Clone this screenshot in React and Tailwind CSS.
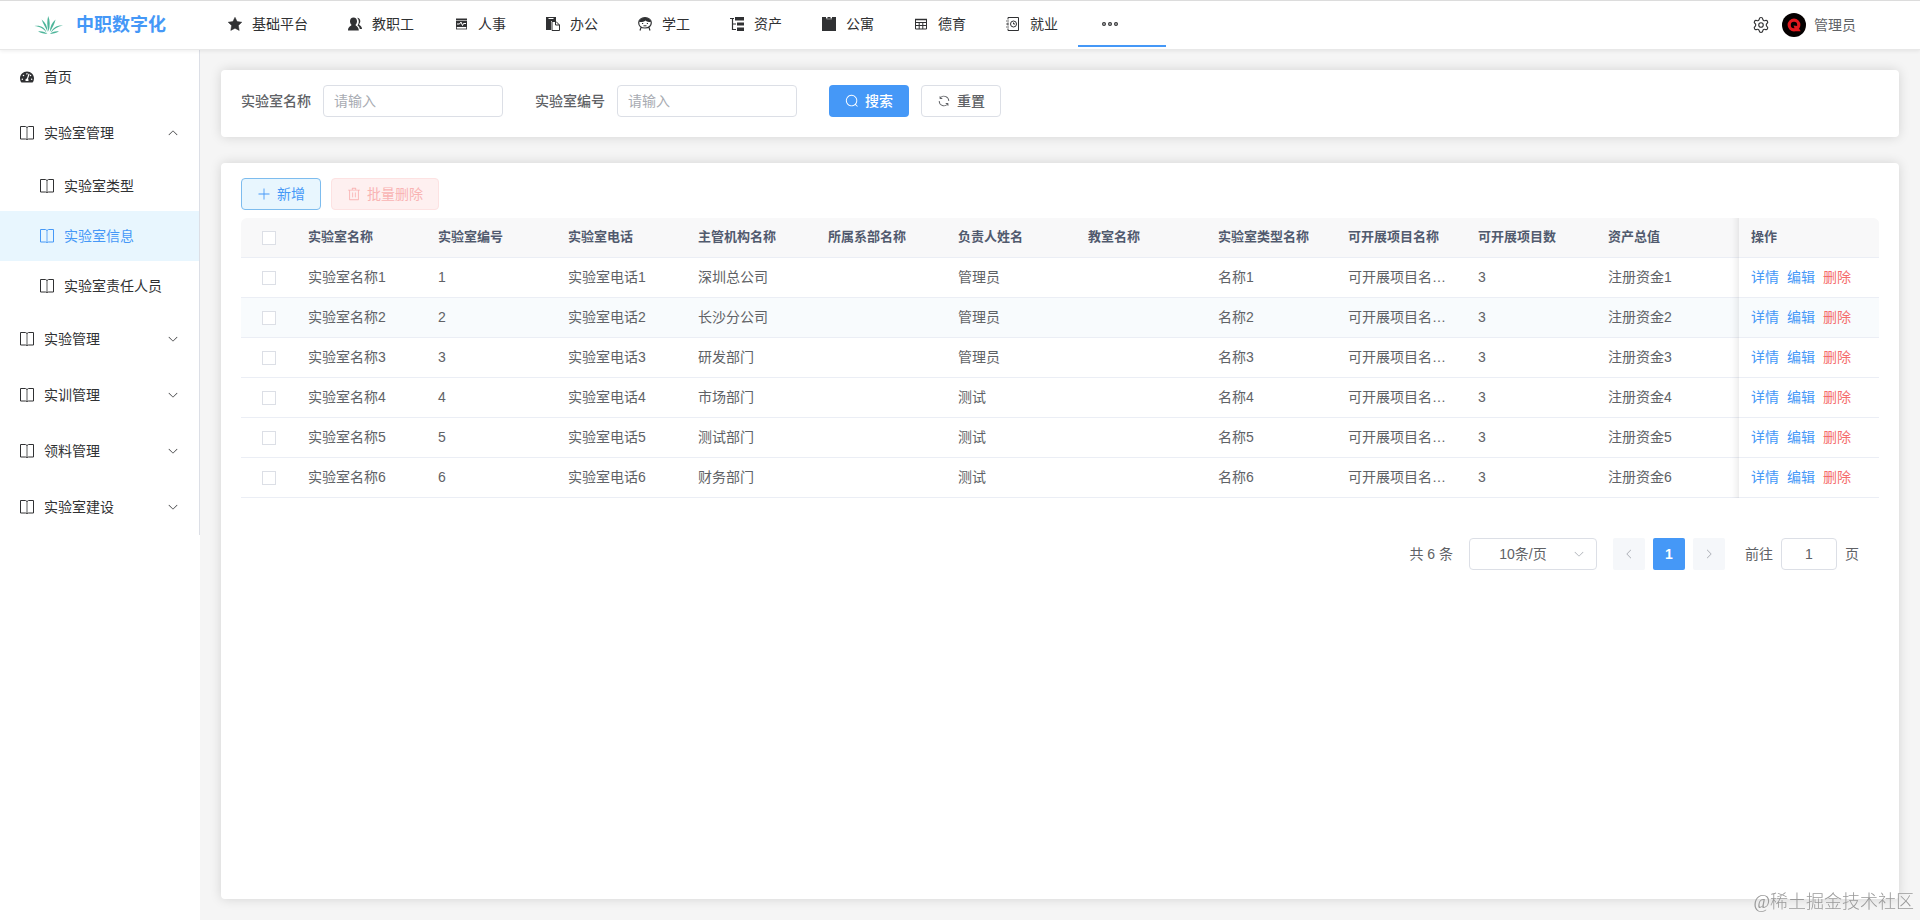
import { useState } from 'react';
import { Settings } from 'lucide-react';
import { FaTachometerAlt } from 'react-icons/fa';
import clsx from 'clsx';

const ICON_PATHS = {
  search: 'm795.904 750.72 124.992 124.928a32 32 0 0 1-45.248 45.248L750.656 795.904a416 416 0 1 1 45.248-45.248zM480 832a352 352 0 1 0 0-704 352 352 0 0 0 0 704',
  refresh: 'M771.776 794.88A384 384 0 0 1 128 512h64a320 320 0 0 0 555.712 216.448H654.72a32 32 0 1 1 0-64h149.056a32 32 0 0 1 32 32v148.928a32 32 0 1 1-64 0v-50.56zM276.288 295.616h92.992a32 32 0 0 1 0 64H220.16a32 32 0 0 1-32-32V178.56a32 32 0 0 1 64 0v50.56A384 384 0 0 1 896.128 512h-64a320 320 0 0 0-555.776-216.384z',
  trash: 'M160 256H96a32 32 0 0 1 0-64h256V95.936a32 32 0 0 1 32-32h256a32 32 0 0 1 32 32V192h256a32 32 0 1 1 0 64h-64v672a32 32 0 0 1-32 32H192a32 32 0 0 1-32-32zm448-64v-64H416v64zM224 896h576V256H224zm192-128a32 32 0 0 1-32-32V416a32 32 0 0 1 64 0v320a32 32 0 0 1-32 32m192 0a32 32 0 0 1-32-32V416a32 32 0 0 1 64 0v320a32 32 0 0 1-32 32',
  plus: 'M480 480V128a32 32 0 0 1 64 0v352h352a32 32 0 1 1 0 64H544v352a32 32 0 1 1-64 0V544H128a32 32 0 0 1 0-64z',
  arrow: 'M831.872 340.864 512 652.672 192.128 340.864a30.592 30.592 0 0 0-42.752 0 29.12 29.12 0 0 0 0 41.6L489.664 714.24a32 32 0 0 0 44.672 0l340.288-331.712a29.12 29.12 0 0 0 0-41.728 30.592 30.592 0 0 0-42.752 0z',
};

function Icon({ name, className = 'size-3.5' }) {
  return (
    <svg viewBox="0 0 1024 1024" fill="currentColor" className={clsx('shrink-0', className)} aria-hidden="true">
      <path d={ICON_PATHS[name]} />
    </svg>
  );
}

function SmallIcon({ children }) {
  return (
    <svg viewBox="0 0 14 14" fill="none" stroke="currentColor" className="size-3.5 shrink-0" aria-hidden="true">
      {children}
    </svg>
  );
}

const BookIcon = () => (
  <SmallIcon>
    <path d="M.5.5v12.500h5L7 13.500l1.500-.5h5V.5h-5L7 1.500 5.500.5Z" />
    <path d="M7 1.500v11.500" strokeWidth="2" opacity=".4" />
  </SmallIcon>
);

const StarIcon = () => (
  <SmallIcon>
    <path
      d="m7 .3 2.100 4.200 4.700.7-3.400 3.300.8 4.900L7 11.200l-4.200 2.200.8-4.900L.2 5.200l4.700-.7Z"
      fill="currentColor"
      strokeWidth=".5"
      strokeLinejoin="round"
    />
  </SmallIcon>
);

const UsersIcon = () => (
  <SmallIcon>
    <g fill="currentColor" stroke="none">
      <path d="M9 .8c2 0 3.300 1.300 3.300 3.300 0 1.300-.5 2.500-1.200 3.200 0 1 2.900 1.700 2.900 4.700h-2.200c-.3-2-1.300-2.900-2.300-3.500.8-1 1.300-2.400 1.300-3.900C10.800 3 10.200 1.700 9 .8Z" />
      <path d="M5.500.5C7.700.5 9 2 9 4.200c0 1.500-.6 2.900-1.500 3.600 0 1.400 3.300 1.400 3.300 5.700H0c0-4.300 3.500-4.300 3.500-5.700C2.600 7.100 2 5.700 2 4.200 2 2 3.300.5 5.500.5Z" />
    </g>
  </SmallIcon>
);

const MonitorIcon = () => (
  <SmallIcon>
    <path d="M2 1.500h11v8.500H2z" fill="currentColor" stroke="none" />
    <path d="M2 3.500h11" stroke="#aaa" />
    <path d="M2 12h11M2.500 10v2M12.500 10v2" opacity=".8" />
    <path d="M3 7h2.500L7 5l1.500 3.500L9.500 6.500H12" stroke="#fff" />
  </SmallIcon>
);

const PasteIcon = () => (
  <SmallIcon>
    <path d="M0 0h10v4H5v9H0z" fill="currentColor" stroke="none" />
    <path d="M2.500 1.500h5" stroke="#fff" />
    <path d="M6 4.500h4l3.500 3.500v5.500H6z" fill="#fff" />
    <path d="M9.500 4.500V8h4" />
  </SmallIcon>
);

const FaceIcon = () => (
  <SmallIcon>
    <path d="M7 .7C3.200.7.7 2.800.7 5.700S3 11 7 11s6.300-2.400 6.300-5.300S10.800.7 7 .7ZM3 10.500 2 13.500M11 10.500l1 3" strokeWidth="1.200" />
    <path d="M1 5C1.500 2 4 .7 7 .7S12.500 2 13 5C10.500 5 8.500 4.500 7.500 3.500 6 5 3.500 5.200 1 5Z" fill="currentColor" stroke="none" />
    <path d="M4 6.500h1.200M8.800 6.500H10M5.500 8.800h3" />
  </SmallIcon>
);

const TreeIcon = () => (
  <SmallIcon>
    <path d="M0 1.500h4M2.500 1v11.500H6M2.500 7H6" strokeWidth="1.200" />
    <path d="M5 0h9v3.500H5zM7 5.500h7v3H7zM7 10.500h7V14H7z" fill="currentColor" stroke="none" />
  </SmallIcon>
);

const CalendarIcon = () => (
  <SmallIcon>
    <path d="M0 0h4v1.500h1.500V0h3v1.500H10V0h4v14H0z" fill="currentColor" stroke="none" />
    <path d="M4.500 2h5.500" stroke="#888" />
  </SmallIcon>
);

const TableIcon = () => (
  <SmallIcon>
    <path d="M1.500 2.500h11v9.500h-11zM1.500 5.500h11M1.500 8.500h11M5.200 5.500v6.500M8.800 5.500v6.500" />
    <path d="M1 2.500h12" strokeWidth="1.500" />
  </SmallIcon>
);

const ContactIcon = () => (
  <SmallIcon>
    <path d="M2 .5h10.500v13H2v-2M2 8.500v-3M2 2.500v-2" />
    <path d="M0 4h3M0 10h3M0 7h2" opacity=".7" />
    <circle cx="7.500" cy="7" r="3" />
    <path d="M7.500 5.500V7H9" />
  </SmallIcon>
);

function LogoIcon() {
  return (
    <svg viewBox="0 0 30 20" fill="#4db59a" className="h-5 w-[30px] shrink-0" aria-hidden="true">
      <path d="M14.600 16.500C12.800 10.500 13 5.500 14.200 1c1.900 4.500 2 9.500.4 15.500Z" />
      <path d="M13.600 17C11.500 12 9 8.500 7.600 4.500 11.500 7.500 13.600 11.500 13.600 17Z" />
      <path d="M15.800 17C16 11.500 18 7.500 21.600 4.500 20.500 9 18.500 12.500 15.800 17Z" />
      <path d="M12.600 18C10 13.500 5.500 11.500.5 11 6.500 10 11 12.500 12.600 18Z" />
      <path d="M16.800 18C18.500 12.500 23 10 29 10.500 23.500 11.500 19.500 14 16.800 18Z" />
      <path d="M13.500 19C10.500 19 6.500 18 4 16.300 8 15.800 11.500 17 13.500 19Z" />
      <path d="M15.800 19C18.500 19 22.500 18 25 16.300 21 15.800 17.800 17 15.800 19Z" />
    </svg>
  );
}

function Avatar() {
  return (
    <svg viewBox="0 0 24 24" className="size-6 shrink-0" aria-hidden="true">
      <circle cx="12" cy="12" r="12" fill="#050000" />
      <circle cx="12" cy="12" r="4.800" fill="none" stroke="#e3191f" strokeWidth="3.200" />
      <path d="m11.500 12.500 4 .5 3.200 5.200h-5Z" fill="#e3191f" />
    </svg>
  );
}

const NAV_ITEMS = [
  { label: '基础平台', icon: <StarIcon /> },
  { label: '教职工', icon: <UsersIcon /> },
  { label: '人事', icon: <MonitorIcon /> },
  { label: '办公', icon: <PasteIcon /> },
  { label: '学工', icon: <FaceIcon /> },
  { label: '资产', icon: <TreeIcon /> },
  { label: '公寓', icon: <CalendarIcon /> },
  { label: '德育', icon: <TableIcon /> },
  { label: '就业', icon: <ContactIcon /> },
];

const SUB_ITEMS = ['实验室类型', '实验室信息', '实验室责任人员'];
const GROUPS = ['实验管理', '实训管理', '领料管理', '实验室建设'];

const COLUMNS = [
  { key: 'name', label: '实验室名称' },
  { key: 'code', label: '实验室编号' },
  { key: 'phone', label: '实验室电话' },
  { key: 'org', label: '主管机构名称' },
  { key: 'dept', label: '所属系部名称' },
  { key: 'owner', label: '负责人姓名' },
  { key: 'room', label: '教室名称' },
  { key: 'type', label: '实验室类型名称' },
  { key: 'project', label: '可开展项目名称' },
  { key: 'count', label: '可开展项目数' },
  { key: 'asset', label: '资产总值' },
];

const ROWS = [
  ['深圳总公司', '管理员'],
  ['长沙分公司', '管理员'],
  ['研发部门', '管理员'],
  ['市场部门', '测试'],
  ['测试部门', '测试'],
  ['财务部门', '测试'],
].map(([org, owner], i) => ({
  id: i + 1,
  name: `实验室名称${i + 1}`,
  code: i + 1,
  phone: `实验室电话${i + 1}`,
  org,
  owner,
  type: `名称${i + 1}`,
  project: `可开展项目名称${i + 1}`,
  count: 3,
  asset: `注册资金${i + 1}`,
}));

function Header() {
  return (
    <header className="relative z-10 flex h-[50px] items-stretch border-t border-b border-t-[#dcdcdc] border-b-[#e8e8e8] bg-white pr-16 shadow-[0_1px_4px_rgba(0,0,0,0.08)]">
      <div className="flex w-52 shrink-0 items-center gap-3 pl-[34px]">
        <LogoIcon />
        <h1 className="text-lg font-bold whitespace-nowrap text-[#4598f7]">中职数字化</h1>
      </div>
      <nav className="flex flex-1 items-stretch pb-0.5">
        {NAV_ITEMS.map((item) => (
          <a key={item.label} href="#" className="flex items-center gap-2.5 px-5 whitespace-nowrap">
            {item.icon}
            {item.label}
          </a>
        ))}
        <button
          type="button"
          aria-label="更多"
          className="flex w-22 items-center border-b-2 border-[#4598f7] pt-0.5 pl-6"
        >
          <svg viewBox="0 0 16 6" fill="none" stroke="currentColor" strokeWidth="1.200" className="h-1.5 w-4" aria-hidden="true">
            <circle cx="2" cy="3" r="1.400" />
            <circle cx="8" cy="3" r="1.400" />
            <circle cx="14" cy="3" r="1.400" />
          </svg>
        </button>
      </nav>
      <div className="flex items-center">
        <button type="button" aria-label="设置" className="mr-3">
          <Settings size={18} strokeWidth={1.500} />
        </button>
        <Avatar />
        <span className="ml-2 text-[#606266]">管理员</span>
      </div>
    </header>
  );
}

function GroupItem({ label, open }) {
  return (
    <button type="button" aria-expanded={!!open} className="flex h-14 w-full items-center gap-2.5 px-5 text-left">
      <BookIcon />
      <span className="flex-1">{label}</span>
      <Icon name="arrow" className={clsx('size-3', open && 'rotate-180')} />
    </button>
  );
}

function Sidebar() {
  return (
    <aside className="w-[200px] shrink-0 bg-white">
      <nav className="-mt-px border-r border-[#dcdfe6]">
        <a href="#" className="flex h-14 items-center gap-2.5 px-5">
          <FaTachometerAlt className="size-3.5" />
          首页
        </a>
        <GroupItem label="实验室管理" open />
        {SUB_ITEMS.map((label) => (
          <a
            key={label}
            href="#"
            className={clsx(
              'flex h-[50px] items-center gap-2.5 pl-10',
              label === '实验室信息' && 'bg-[#e8f6fe] text-[#4598f7]'
            )}
          >
            <BookIcon />
            {label}
          </a>
        ))}
        {GROUPS.map((label) => (
          <GroupItem key={label} label={label} />
        ))}
      </nav>
    </aside>
  );
}

function SearchField({ id, label }) {
  return (
    <div className="flex items-center gap-3">
      <label htmlFor={id} className="font-medium text-[#606266]">{label}</label>
      <input
        id={id}
        type="text"
        placeholder="请输入"
        className="h-8 w-45 rounded border border-[#dcdfe6] bg-white px-2.5 text-[#606266] placeholder-[#a8abb2] focus:border-[#4598f7] focus:outline-none"
      />
    </div>
  );
}

function Checkbox({ label, checked, onChange }) {
  return (
    <input
      type="checkbox"
      aria-label={label}
      checked={checked}
      onChange={onChange}
      className="mx-auto block size-3.5 appearance-none border border-[#dcdfe6] bg-white checked:border-[#4598f7] checked:bg-[#4598f7]"
    />
  );
}

// soft edge that the pinned column casts on the cells to its left
const PINNED =
  'sticky right-0 px-3 before:pointer-events-none before:absolute before:top-0 before:-bottom-px before:-left-2.5 before:w-2.5 before:shadow-[inset_-10px_0_10px_-10px_rgba(0,0,0,0.14)]';

function LabTable() {
  const [selected, setSelected] = useState([]);
  const allSelected = selected.length === ROWS.length;

  const toggle = (id) =>
    setSelected((prev) => (prev.includes(id) ? prev.filter((x) => x !== id) : [...prev, id]));

  return (
    <div className="overflow-x-auto rounded-t-md">
      <table className="w-full min-w-[1600px] table-fixed border-separate border-spacing-0 text-left text-[#606266]">
        <colgroup>
          <col className="w-[55px]" />
          {COLUMNS.map((c) => (
            <col key={c.key} className={c.key === 'asset' ? 'w-auto' : 'w-[130px]'} />
          ))}
          <col className="w-[140px]" />
        </colgroup>
        <thead>
          <tr className="h-10 bg-[#f8f8f9] text-[13px] text-[#515a6e]">
            <th className="border-b border-[#ebeef5]">
              <Checkbox
                label="全选"
                checked={allSelected}
                onChange={() => setSelected(allSelected ? [] : ROWS.map((r) => r.id))}
              />
            </th>
            {COLUMNS.map((c) => (
              <th key={c.key} className="border-b border-[#ebeef5] px-3 font-bold whitespace-nowrap">{c.label}</th>
            ))}
            <th className={clsx(PINNED, 'border-b border-[#ebeef5] bg-[#f8f8f9] font-bold')}>操作</th>
          </tr>
        </thead>
        <tbody>
          {ROWS.map((row) => {
            const bg = row.id === 2 ? 'bg-[#f8fbfd]' : 'bg-white';
            return (
              <tr key={row.id} className={clsx('h-10', bg)}>
                <td className="border-b border-[#ebeef5]">
                  <Checkbox
                    label={row.name}
                    checked={selected.includes(row.id)}
                    onChange={() => toggle(row.id)}
                  />
                </td>
                {COLUMNS.map((c) => (
                  <td key={c.key} className="truncate border-b border-[#ebeef5] pr-4 pb-0.5 pl-3">{row[c.key]}</td>
                ))}
                <td className={clsx(PINNED, 'border-b border-[#ebeef5] pb-0.5', bg)}>
                  <div className="flex gap-2 text-[#4598f7]">
                    <button type="button">详情</button>
                    <button type="button">编辑</button>
                    <button type="button" className="text-[#f56c6c]">删除</button>
                  </div>
                </td>
              </tr>
            );
          })}
        </tbody>
      </table>
    </div>
  );
}

function Pagination() {
  return (
    <div className="mt-10 flex items-center justify-end pr-5 text-[#606266]">
      <span className="mr-4">共 6 条</span>
      <div className="relative mr-4">
        <select
          aria-label="每页条数"
          className="h-8 w-32 appearance-none rounded border border-[#dcdfe6] bg-white pr-5 text-center [text-align-last:center]"
        >
          <option>10条/页</option>
          <option>20条/页</option>
          <option>50条/页</option>
        </select>
        <Icon name="arrow" className="pointer-events-none absolute top-2.5 right-3 size-3 text-[#a8abb2]" />
      </div>
      <div className="flex gap-2">
        <button
          type="button"
          aria-label="上一页"
          disabled
          className="flex size-8 items-center justify-center rounded-xs bg-[#f5f7fa] text-[#a8abb2]"
        >
          <Icon name="arrow" className="size-3 rotate-90" />
        </button>
        <button type="button" className="size-8 rounded-xs bg-[#4598f7] font-bold text-white">1</button>
        <button
          type="button"
          aria-label="下一页"
          disabled
          className="flex size-8 items-center justify-center rounded-xs bg-[#f5f7fa] text-[#a8abb2]"
        >
          <Icon name="arrow" className="size-3 -rotate-90" />
        </button>
      </div>
      <label htmlFor="goto-page" className="mr-2 ml-5">前往</label>
      <input
        id="goto-page"
        type="text"
        defaultValue="1"
        className="mr-2 h-8 w-14 rounded border border-[#dcdfe6] text-center focus:outline-none"
      />
      <span>页</span>
    </div>
  );
}

export default function App() {
  return (
    <div className="flex min-h-screen flex-col bg-[#f5f5f5] font-['Liberation_Sans','Noto_Sans_CJK_SC',sans-serif] text-sm text-[#303133]">
      <Header />
      <div className="flex flex-1">
        <Sidebar />
        <main className="flex min-w-0 flex-1 flex-col gap-[26px] px-[21px] pt-5 pb-[21px]">
          <section className="flex gap-8 rounded bg-white px-5 pt-[15px] pb-5 shadow-[0_0_12px_rgba(0,0,0,0.14)]">
            <SearchField id="lab-name" label="实验室名称" />
            <SearchField id="lab-code" label="实验室编号" />
            <div className="flex gap-3">
              <button
                type="button"
                className="flex h-8 w-20 items-center justify-center gap-1.5 rounded bg-[#4598f7] font-medium text-white"
              >
                <Icon name="search" />
                搜索
              </button>
              <button
                type="button"
                className="flex h-8 w-20 items-center justify-center gap-1.5 rounded border border-[#dcdfe6] bg-white font-medium text-[#606266]"
              >
                <Icon name="refresh" />
                重置
              </button>
            </div>
          </section>

          <section className="flex-1 rounded bg-white px-5 py-[15px] shadow-[0_0_12px_rgba(0,0,0,0.14)]">
            <div className="mb-2 flex gap-2.5">
              <button
                type="button"
                className="flex h-8 w-20 items-center justify-center gap-1.5 rounded border border-[#7dbcee] bg-[#e8f6fe] text-[#4598f7]"
              >
                <Icon name="plus" />
                新增
              </button>
              <button
                type="button"
                disabled
                className="flex h-8 w-27 items-center justify-center gap-1.5 rounded border border-[#fde2e2] bg-[#fef0f0] text-[#f9b4b4]"
              >
                <Icon name="trash" />
                批量删除
              </button>
            </div>
            <LabTable />
            <Pagination />
          </section>
        </main>
      </div>
      <div className="pointer-events-none fixed right-1.5 bottom-1.5 font-['Liberation_Serif','Noto_Sans_CJK_SC',serif] text-lg leading-6 font-light text-[#9a9a9a]">
        @稀土掘金技术社区
      </div>
    </div>
  );
}
